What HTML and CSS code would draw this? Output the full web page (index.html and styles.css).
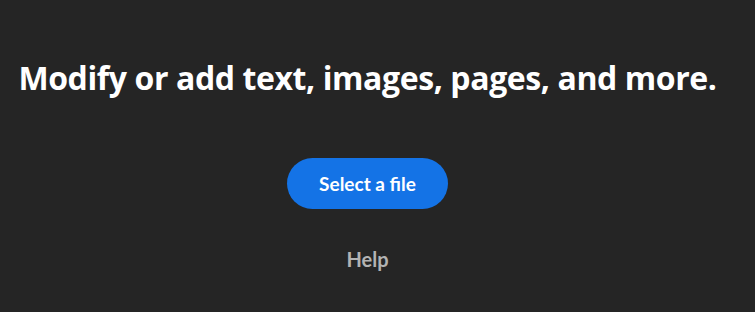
FILE: index.html
```html
<!DOCTYPE html>
<html lang="en">
<head>
    <meta charset="UTF-8">
    <title>Edit PDF</title>
    <link rel="stylesheet" href="styles.css">
</head>
<body>
<div class="container">
    <h1 class="headline">Modify or add text, images, pages, and more.</h1>
    <button class="select-button">Select a file</button>
    <a class="help-link" href="#">Help</a>
</div>
</body>
</html>
```

FILE: styles.css
```css
body {
    margin: 0;
    background-color: #252525;
    font-family: "Lato", "Open Sans", sans-serif;
}

.container {
    display: flex;
    flex-direction: column;
    align-items: center;
    width: 735px;
    height: 312px;
    padding-top: 58px;
    box-sizing: border-box;
}

.headline {
    margin: 0;
    color: #fff;
    font-family: "Open Sans", sans-serif;
    font-size: 32px;
    font-weight: 700;
    line-height: 40px;
    letter-spacing: -0.4px;
}

.select-button {
    margin-top: 60px;
    width: 161px;
    height: 51px;
    border: none;
    border-radius: 26px;
    background-color: #1473e6;
    color: #fff;
    font-family: inherit;
    font-size: 19px;
    font-weight: 700;
    cursor: pointer;
}

.help-link {
    margin-top: 38px;
    color: #b3b3b3;
    font-size: 20px;
    font-weight: 700;
    text-decoration: none;
}
```
